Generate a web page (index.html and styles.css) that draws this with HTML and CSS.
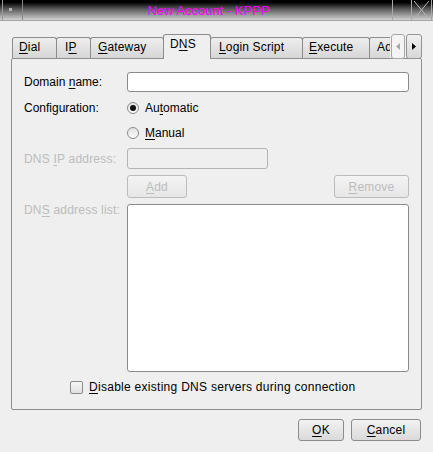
FILE: index.html
```html
<!DOCTYPE html>
<html>
<head>
<meta charset="utf-8">
<title>New Account - KPPP</title>
<link rel="stylesheet" href="styles.css">
</head>
<body>
<div class="window">
  <div class="titlebar">
    <div class="tb-btn tb-menu"><span class="tb-dot"></span></div>
    <div class="tb-title">New Account - KPPP</div>
    <div class="tb-btn tb-min"></div>
    <div class="tb-btn tb-close">
      <svg width="18" height="20" viewBox="0 0 18 20"><path d="M2 1 L17 19 M17 1 L2 19" stroke="#b8b8b8" stroke-width="1" fill="none"/></svg>
    </div>
  </div>

  <div class="content">
    <div class="tabbar">
      <div class="tabs">
        <div class="tab t-dial"><u>D</u>ial</div>
        <div class="tab t-ip">I<u>P</u></div>
        <div class="tab t-gw"><u>G</u>ateway</div>
        <div class="tab t-dns active">D<u>N</u>S</div>
        <div class="tab t-login"><u>L</u>ogin Script</div>
        <div class="tab t-exec"><u>E</u>xecute</div>
        <div class="tab t-adv">Advanced</div>
      </div>
      <div class="scroll-btns">
        <div class="sbtn sbtn-left">
          <svg width="4" height="7" viewBox="0 0 4 7"><path d="M4 0 L0 3.5 L4 7 Z" fill="#a8a8a8"/></svg>
        </div>
        <div class="sbtn sbtn-right">
          <svg width="4" height="7" viewBox="0 0 4 7"><path d="M0 0 L4 3.5 L0 7 Z" fill="#000"/></svg>
        </div>
      </div>
    </div>

    <div class="panel">
      <div class="form">
        <div class="row row-domain">
          <label class="lbl">Domain <u>n</u>ame:</label>
          <div class="field input"></div>
        </div>
        <div class="row row-auto">
          <span class="lbl">Configuration:</span>
          <div class="choice"><span class="radio checked"><span class="radio-dot"></span></span><span>Au<u>t</u>omatic</span></div>
        </div>
        <div class="row row-manual">
          <span class="lbl"></span>
          <div class="choice"><span class="radio"></span><span><u>M</u>anual</span></div>
        </div>
        <div class="row row-ip">
          <span class="lbl disabled">DNS <u>I</u>P address:</span>
          <div class="field input-disabled ip-input"></div>
        </div>
        <div class="row row-btns">
          <span class="lbl"></span>
          <div class="btn-line">
            <div class="btn btn-disabled btn-add"><u>A</u>dd</div>
            <div class="btn btn-disabled btn-remove"><u>R</u>emove</div>
          </div>
        </div>
        <div class="row row-list">
          <span class="lbl disabled lbl-top">DN<u>S</u> address list:</span>
          <div class="listbox"></div>
        </div>
        <div class="row-check">
          <span class="checkbox"></span><span class="check-text"><u>D</u>isable existing DNS servers during connection</span>
        </div>
      </div>
    </div>

    <div class="footer">
      <div class="btn btn-ok"><u>O</u>K</div>
      <div class="btn btn-cancel"><u>C</u>ancel</div>
    </div>
  </div>
</div>
</body>
</html>
```
FILE: styles.css
```css
* { box-sizing: border-box; }
html, body { margin: 0; padding: 0; }
body {
  width: 433px;
  height: 452px;
  overflow: hidden;
  background: #efefef;
  font-family: "Liberation Sans", Arial, sans-serif;
  font-size: 12px;
  line-height: 14px;
  color: #000;
}
u { text-decoration: underline; text-underline-offset: 2px; text-decoration-thickness: 1px; }

/* Title bar */
.titlebar {
  height: 21px;
  display: flex;
  background: linear-gradient(to bottom, #000 0%, #000 12%, #5a5a5a 45%, #d2d2d2 100%);
  border-bottom: 1px solid #a4a4a4;
}
.tb-btn { height: 20px; flex: none; }
.tb-menu {
  width: 21px;
  margin-left: 2px;
  border-left: 1px solid #9a9a9a;
  border-right: 1px solid #8a8a8a;
  position: relative;
}
.tb-dot {
  position: absolute;
  left: 6px;
  top: 8px;
  width: 3px;
  height: 3px;
  background: #b4b4b4;
}
.tb-title {
  flex: 1;
  text-align: center;
  color: #ff00ff;
  font-size: 13px;
  line-height: 15px;
  padding-top: 3px;
  padding-left: 2px;
}
.tb-min {
  width: 20px;
  border-left: 1px solid #a8a8a8;
  border-right: 1px solid #a8a8a8;
}
.tb-close {
  width: 20px;
  margin-right: 1px;
  border-right: 1px solid #a8a8a8;
  overflow: hidden;
}
.tb-close svg { display: block; }

/* Content */
.content { padding: 0 11px; }

.tabbar {
  margin-top: 13px;
  height: 25px;
  display: flex;
  position: relative;
  z-index: 2;
}
.tabs {
  flex: 1;
  display: flex;
  align-items: flex-end;
  overflow: hidden;
  padding-left: 1px;
  height: 25px;
}
.tab {
  flex: none;
  height: 21px;
  margin-bottom: 1px;
  margin-left: -1px;
  border: 1px solid #8c8c8c;
  border-bottom: none;
  border-radius: 3px 3px 0 0;
  background: linear-gradient(to bottom, #eeeeee, #d6d6d6);
  padding-top: 2px;
  padding-left: 7px;
  white-space: nowrap;
  letter-spacing: 0.15px;
}
.tab:first-child { margin-left: 0; }
.tab.active {
  height: 25px;
  margin-bottom: 0;
  background: #efefef;
  padding-top: 2px;
  position: relative;
  z-index: 3;
}
.t-dial { width: 45px; padding-left: 6px; }
.t-ip { width: 35px; padding-left: 8px; }
.t-gw { width: 74px; padding-left: 7px; }
.t-dns { width: 48px; padding-left: 6px; }
.t-login { width: 93px; padding-left: 8px; }
.t-exec { width: 68px; padding-left: 6px; }
.t-adv { width: 90px; padding-left: 7px; }

.scroll-btns {
  flex: none;
  width: 32px;
  display: flex;
  gap: 1px;
  padding-left: 1px;
}
.sbtn {
  height: 25px;
  border: 1px solid #949494;
  border-radius: 3px;
  display: flex;
  align-items: center;
  justify-content: center;
}
.sbtn svg { display: block; }
.sbtn-left { width: 14px; background: #f4f4f4; border-color: #a8a8a8; }
.sbtn-right { width: 16px; background: linear-gradient(to bottom, #f0f0f0, #d8d8d8); }

/* Panel */
.panel {
  margin-top: -1px;
  height: 352px;
  border: 1px solid #8e8e8e;
  border-radius: 2px;
  padding: 13px 12px 13px 12px;
  position: relative;
  z-index: 1;
}
.form { display: flex; flex-direction: column; }
.row {
  display: grid;
  grid-template-columns: 103px 1fr;
  align-items: center;
}
.lbl { white-space: nowrap; }
.disabled { color: #bcbcbc; letter-spacing: 0.2px; }
.row-domain { height: 20px; }
.row-auto { height: 18px; margin-top: 7px; }
.row-manual { height: 18px; margin-top: 7px; }
.row-ip { height: 21px; margin-top: 6px; }
.row-btns { height: 23px; margin-top: 6px; }
.row-list { height: 168px; margin-top: 6px; align-items: start; }
.lbl-top { margin-top: -1px; }

.field { height: 100%; border-radius: 3px; }
.input { background: #fff; border: 1px solid #8a8a8a; }
.input-disabled { background: #efefef; border: 1px solid #b4b4b4; }
.ip-input { width: 141px; }

.choice { display: flex; align-items: center; gap: 6px; }
.radio {
  width: 12px;
  height: 12px;
  border-radius: 50%;
  border: 1px solid #8a8a8a;
  background: linear-gradient(to bottom, #e2e2e2, #fafafa);
  display: flex;
  align-items: center;
  justify-content: center;
  flex: none;
}
.radio-dot { width: 6px; height: 6px; border-radius: 50%; background: #111; }

.btn-line { display: flex; justify-content: space-between; height: 100%; }
.btn {
  height: 100%;
  border: 1px solid #8c8c8c;
  border-radius: 3px;
  background: linear-gradient(to bottom, #f2f2f2, #dadada);
  display: flex;
  align-items: center;
  justify-content: center;
  letter-spacing: 0.2px;
}
.btn-disabled {
  color: #bcbcbc;
  border-color: #bcbcbc;
  background: linear-gradient(to bottom, #f4f4f4, #e6e6e6);
}
.btn-add { width: 60px; }
.btn-remove { width: 75px; }

.listbox {
  height: 168px;
  background: #fff;
  border: 1px solid #8a8a8a;
  border-radius: 3px;
}

.row-check {
  height: 18px;
  margin-top: 6px;
  display: flex;
  align-items: center;
  gap: 6px;
  padding-left: 46px;
}
.check-text { letter-spacing: 0.28px; }
.checkbox {
  width: 13px;
  height: 13px;
  border: 1px solid #8a8a8a;
  border-radius: 2px;
  background: linear-gradient(to bottom, #f6f6f6, #e0e0e0);
  flex: none;
}

/* Footer */
.footer {
  margin-top: 9px;
  display: flex;
  justify-content: flex-end;
  gap: 7px;
  padding-right: 1px;
}
.footer .btn { height: 22px; }
.btn-ok { width: 46px; }
.btn-cancel { width: 70px; }
```
